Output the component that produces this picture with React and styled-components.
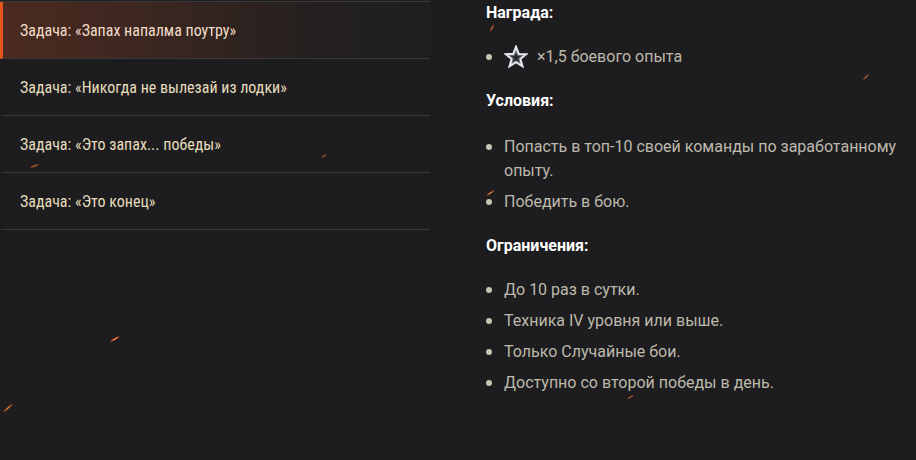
import React from 'react';
import styled, { createGlobalStyle } from 'styled-components';

const GlobalStyle = createGlobalStyle`
  html, body {
    margin: 0;
    padding: 0;
    background: #1d1d1f;
  }
  body {
    font-family: Roboto, 'Liberation Sans', sans-serif;
  }
`;

const Page = styled.div`
  position: relative;
  width: 916px;
  height: 460px;
  overflow: hidden;
  background: #1d1d1f;
  display: flex;
  align-items: flex-start;
`;

const TaskList = styled.ul`
  list-style: none;
  margin: 1px 0 0;
  padding: 0;
  width: 430px;
  border-top: 1px solid #3a3a3c;
`;

const TaskItem = styled.li`
  height: 56px;
  display: flex;
  align-items: center;
  padding-left: 17px;
  border-bottom: 1px solid #3a3a3c;
  border-left: 3px solid ${({ active }) => (active ? '#e5561e' : 'transparent')};
  background: ${({ active }) =>
    active ? 'linear-gradient(90deg, #4b2a20 0%, #3b2620 35%, #24201f 72%, #1f1e1f 100%)' : 'transparent'};
  color: ${({ active }) => (active ? '#f0dcc8' : '#e6dcbc')};
  font-family: 'Liberation Sans Narrow', 'Roboto Condensed', Roboto, sans-serif;
  font-size: 16px;
  cursor: pointer;
`;

const Details = styled.div`
  margin-left: 56px;
  padding-top: 3px;
  width: 420px;
`;

const Heading = styled.h4`
  margin: 0 0 ${({ gap }) => gap || 24}px;
  color: #ffffff;
  font-size: 16px;
  font-weight: 700;
  line-height: 20px;
`;

const Bullets = styled.ul`
  list-style: none;
  margin: 0 0 ${({ gap }) => gap || 21}px;
  padding: 0;
`;

const Bullet = styled.li`
  position: relative;
  padding-left: 18px;
  margin-bottom: 7px;
  color: #bdb9ab;
  font-size: 16px;
  line-height: 24px;
  display: flex;
  align-items: center;

  &::before {
    content: '';
    position: absolute;
    left: 0;
    top: 9px;
    width: 6px;
    height: 6px;
    border-radius: 50%;
    background: #c9c5b2;
  }
`;

const Star = styled.svg`
  width: 24px;
  height: 24px;
  margin-right: 9px;
  flex: none;
`;

const Spark = styled.span`
  position: absolute;
  width: ${({ w }) => w || 8}px;
  height: 2px;
  border-radius: 2px;
  background: radial-gradient(ellipse, #ffd08a 0%, #e5561e 45%, rgba(160, 30, 10, 0) 100%);
  transform: rotate(${({ r }) => r || -35}deg);
  opacity: ${({ o }) => o || 0.9};
`;

const sparks = [
  { x: 110, y: 338, w: 10, r: -30, o: 1 },
  { x: 2, y: 407, w: 12, r: -40, o: 0.8 },
  { x: 30, y: 165, w: 9, r: -20, o: 0.6 },
  { x: 321, y: 155, w: 6, r: -30, o: 0.5 },
  { x: 488, y: 27, w: 8, r: -60, o: 0.6 },
  { x: 862, y: 76, w: 8, r: -45, o: 0.6 },
  { x: 486, y: 192, w: 9, r: -35, o: 0.8 },
  { x: 627, y: 396, w: 7, r: -30, o: 0.6 },
];

const tasks = [
  'Задача: «Запах напалма поутру»',
  'Задача: «Никогда не вылезай из лодки»',
  'Задача: «Это запах... победы»',
  'Задача: «Это конец»',
];

const conditions = [
  'Попасть в топ-10 своей команды по заработанному опыту.',
  'Победить в бою.',
];

const limits = [
  'До 10 раз в сутки.',
  'Техника IV уровня или выше.',
  'Только Случайные бои.',
  'Доступно со второй победы в день.',
];

export default function App() {
  return (
    <>
      <GlobalStyle />
      <Page>
        <TaskList>
          {tasks.map((t, i) => (
            <TaskItem key={i} active={i === 0}>
              {t}
            </TaskItem>
          ))}
        </TaskList>

        <Details>
          <Heading gap={22}>Награда:</Heading>
          <Bullets gap={22}>
            <Bullet>
              <Star viewBox="0 0 24 24">
                <path
                  d="M12 2l2.7 7 7.3.3-5.7 4.6 2 7.1L12 17l-6.3 4 2-7.1L2 9.3 9.3 9z"
                  fill="#2a2c30"
                  stroke="#e4e8ec"
                  strokeWidth="2.2"
                  strokeLinejoin="miter"
                />
                <path
                  d="M12 6.2l1.7 4.4 4.6.2-3.6 2.9 1.3 4.5L12 15.7l-4 2.5 1.3-4.5-3.6-2.9 4.6-.2z"
                  fill="none"
                  stroke="#7a8088"
                  strokeWidth="0.8"
                />
              </Star>
              ×1,5 боевого опыта
            </Bullet>
          </Bullets>

          <Heading>Условия:</Heading>
          <Bullets gap={22}>
            {conditions.map((c, i) => (
              <Bullet key={i}>{c}</Bullet>
            ))}
          </Bullets>

          <Heading gap={22}>Ограничения:</Heading>
          <Bullets>
            {limits.map((c, i) => (
              <Bullet key={i}>{c}</Bullet>
            ))}
          </Bullets>
        </Details>

        {sparks.map((s, i) => (
          <Spark key={i} w={s.w} r={s.r} o={s.o} style={{ left: s.x, top: s.y }} />
        ))}
      </Page>
    </>
  );
}
